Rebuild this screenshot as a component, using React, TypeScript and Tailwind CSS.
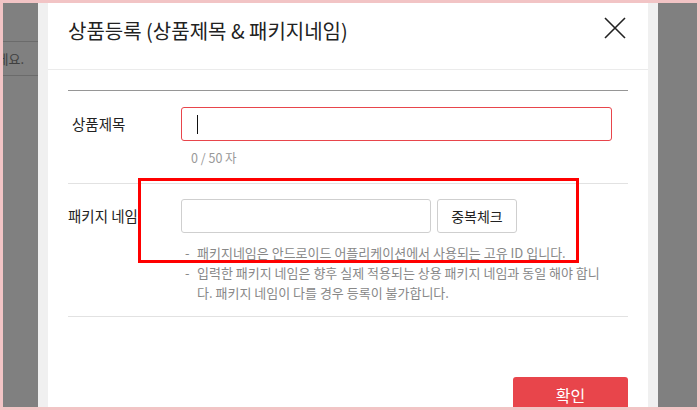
import React from 'react';

const font = { fontFamily: '"Noto Sans CJK KR", "Noto Sans", sans-serif' };

const CloseIcon: React.FC = () => (
	<svg width="22" height="22" viewBox="0 0 22 22" className="mt-[1px] shrink-0">
		<path d="M1 1 L21 21 M21 1 L1 21" stroke="#222" strokeWidth="1.6" fill="none" />
	</svg>
);

const Backdrop: React.FC<{ left?: boolean }> = ({ left }) => (
	<div className={`flex shrink-0 flex-col bg-[#808080] ${left ? 'w-[35px]' : 'w-[39px]'}`}>
		{left && (
			<>
				<div className="mt-[38px] h-px bg-[#6b6b6b]" />
				<div className="flex h-[33px] items-center justify-end overflow-hidden whitespace-nowrap pr-[14px] text-[13px] text-[#3f3f3f]">
					입력해주세요.
				</div>
				<div className="h-px bg-[#6b6b6b]" />
			</>
		)}
	</div>
);

export default function App() {
	return (
		<div className="h-[410px] w-[700px] border-[3px] border-[#f2c4c5] bg-white" style={font}>
			<div className="flex h-full overflow-hidden">
				<Backdrop left />
				<div className="w-[10px] shrink-0 bg-[#f0f0f0]" />

				{/* modal */}
				<div className="relative flex w-[600px] shrink-0 flex-col bg-white">
					<div className="flex h-[67px] shrink-0 justify-between border-b border-[#ebebeb] pl-[20px] pr-[22px] pt-[13px]">
						<h1 className="text-[20px] leading-[30px] text-[#222]">상품등록 (상품제목 &amp; 패키지네임)</h1>
						<CloseIcon />
					</div>

					<div className="flex shrink-0 flex-col px-[20px]">
						<div className="mt-[20px] h-px bg-[#969696]" />

						{/* 상품제목 */}
						<div className="pt-[16px]">
							<div className="flex items-center">
								<label className="w-[113px] pl-[4px] text-[14.5px] text-[#222]">상품제목</label>
								<div className="flex h-[34px] w-[431px] items-center rounded-[3px] border border-[#e8454b] pl-[15px]">
									<span className="h-[19px] w-px bg-[#111]" />
								</div>
							</div>
							<div className="ml-[123px] mt-[8px] text-[12.5px] leading-[18px] text-[#999]">0 / 50 자</div>
						</div>

						<div className="mt-[16px] h-px bg-[#e2e2e2]" />

						{/* 패키지 네임 */}
						<div className="pt-[15px]">
							<div className="flex items-center">
								<label className="w-[113px] text-[14.5px] text-[#222]">패키지 네임</label>
								<input className="h-[34px] w-[250px] rounded-[3px] border border-[#cfcfcf] px-2 text-[13px] outline-none" />
								<button className="ml-[6px] h-[34px] w-[80px] rounded-[3px] border border-[#cfcfcf] bg-white text-[14px] text-[#222]">
									중복체크
								</button>
							</div>
							<ul className="ml-[117px] mt-[10px] whitespace-nowrap text-[13px] leading-[20px] text-[#888]">
								<li className="flex">
									<span className="w-[12px] shrink-0">-</span>
									<span>패키지네임은 안드로이드 어플리케이션에서 사용되는 고유 ID 입니다.</span>
								</li>
								<li className="flex">
									<span className="w-[12px] shrink-0">-</span>
									<span>
										입력한 패키지 네임은 향후 실제 적용되는 상용 패키지 네임과 동일 해야 합니
										<br />
										다. 패키지 네임이 다를 경우 등록이 불가합니다.
									</span>
								</li>
							</ul>
						</div>

						<div className="mt-[13px] h-px bg-[#e2e2e2]" />

						<div className="mt-[60px] flex justify-end">
							<button className="h-[36px] w-[115px] shrink-0 rounded-[3px] bg-[#e8454b] text-[16px] leading-[36px] text-white">확인</button>
						</div>
					</div>

					{/* annotation box */}
					<div className="absolute left-[90px] top-[175px] h-[85px] w-[441px] border-[3px] border-[#ff0000]" />
				</div>

				<div className="w-[10px] shrink-0 bg-[#f0f0f0]" />
				<Backdrop />
			</div>
		</div>
	);
}
